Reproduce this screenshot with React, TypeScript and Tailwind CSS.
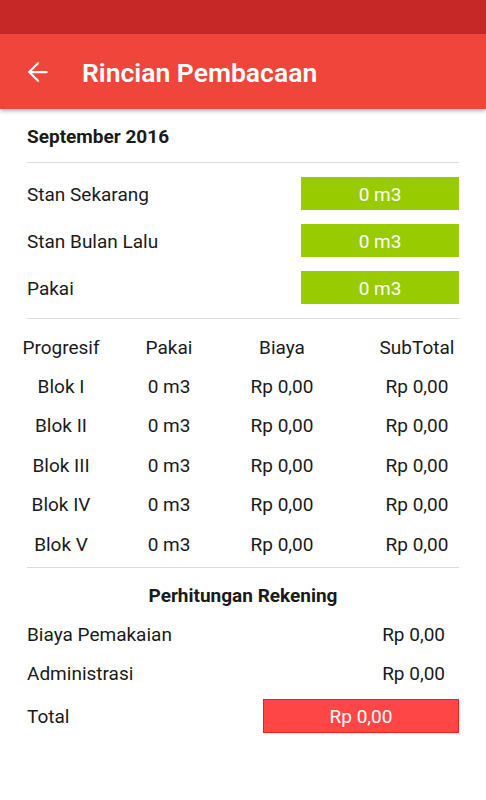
import { ArrowLeft } from 'lucide-react';

const meterRows = [
  { label: 'Stan Sekarang', value: '0 m3' },
  { label: 'Stan Bulan Lalu', value: '0 m3' },
  { label: 'Pakai', value: '0 m3' },
];

const blocks = ['Blok I', 'Blok II', 'Blok III', 'Blok IV', 'Blok V'];

export default function App() {
  return (
    <div className="min-h-[800px] w-[486px] bg-white text-[#1a1a1a]" style={{ fontFamily: 'Roboto, "Noto Sans", sans-serif' }}>
      {/* status bar + toolbar */}
      <div className="h-[34px] bg-[#c62828]" />
      <header className="relative z-10 flex h-[75px] items-center bg-[#f0453a] shadow-[0_2px_4px_rgba(0,0,0,0.3)]">
        <ArrowLeft className="ml-[23px] mt-[1px] h-[30px] w-[30px] text-white" strokeWidth={1.8} />
        <h1 className="ml-[29px] pt-[2px] text-[26.5px] font-semibold text-white">Rincian Pembacaan</h1>
      </header>

      <main>
        <div className="px-[27px]">
          <div className="flex h-[53px] items-center pt-[4px] text-[19px] font-bold">September 2016</div>
          <div className="h-px bg-[#dcdcdc]" />

          <div className="flex flex-col gap-[14px] pt-[14px] pb-[14px]">
            {meterRows.map((r) => (
              <div key={r.label} className="flex h-[33px] items-center justify-between">
                <span className="pt-[3px] text-[19px]">{r.label}</span>
                <span className="flex h-[33px] w-[158px] items-center justify-center bg-[#99cc00] pt-[3px] text-[19px] text-white">
                  {r.value}
                </span>
              </div>
            ))}
          </div>
          <div className="h-px bg-[#dcdcdc]" />
        </div>

        {/* progressive table */}
        <div className="grid grid-cols-[122px_94px_132px_138px] pt-[9px] text-center text-[19px]">
          <div className="flex h-[38px] items-center justify-center pt-[3px]">Progresif</div>
          <div className="flex h-[38px] items-center justify-center pt-[3px]">Pakai</div>
          <div className="flex h-[38px] items-center justify-center pt-[3px]">Biaya</div>
          <div className="flex h-[38px] items-center justify-center pt-[3px]">SubTotal</div>
          {blocks.map((b) => (
            <>
              <div key={b} className="flex h-[39.4px] items-center justify-center pt-[3px]">{b}</div>
              <div className="flex h-[39.4px] items-center justify-center pt-[3px]">0 m3</div>
              <div className="flex h-[39.4px] items-center justify-center pt-[3px]">Rp 0,00</div>
              <div className="flex h-[39.4px] items-center justify-center pt-[3px]">Rp 0,00</div>
            </>
          ))}
        </div>

        <div className="px-[27px] pt-[4px]">
          <div className="h-px bg-[#dcdcdc]" />
          <div className="flex h-[46px] items-center justify-center pt-[10px] text-[19px] font-bold">Perhitungan Rekening</div>
          <div className="flex h-[39px] items-center justify-between pt-[3px] pr-[14px] text-[19px]">
            <span>Biaya Pemakaian</span>
            <span>Rp 0,00</span>
          </div>
          <div className="flex h-[39px] items-center justify-between pt-[3px] pr-[14px] text-[19px]">
            <span>Administrasi</span>
            <span>Rp 0,00</span>
          </div>
          <div className="mt-[7px] flex h-[34px] items-center justify-between text-[19px]">
            <span className="pt-[3px]">Total</span>
            <span className="flex h-[34px] w-[196px] items-center justify-center border border-[#ff1a1a] bg-[#ff4646] pt-[3px] text-white">
              Rp 0,00
            </span>
          </div>
        </div>
      </main>
    </div>
  );
}
